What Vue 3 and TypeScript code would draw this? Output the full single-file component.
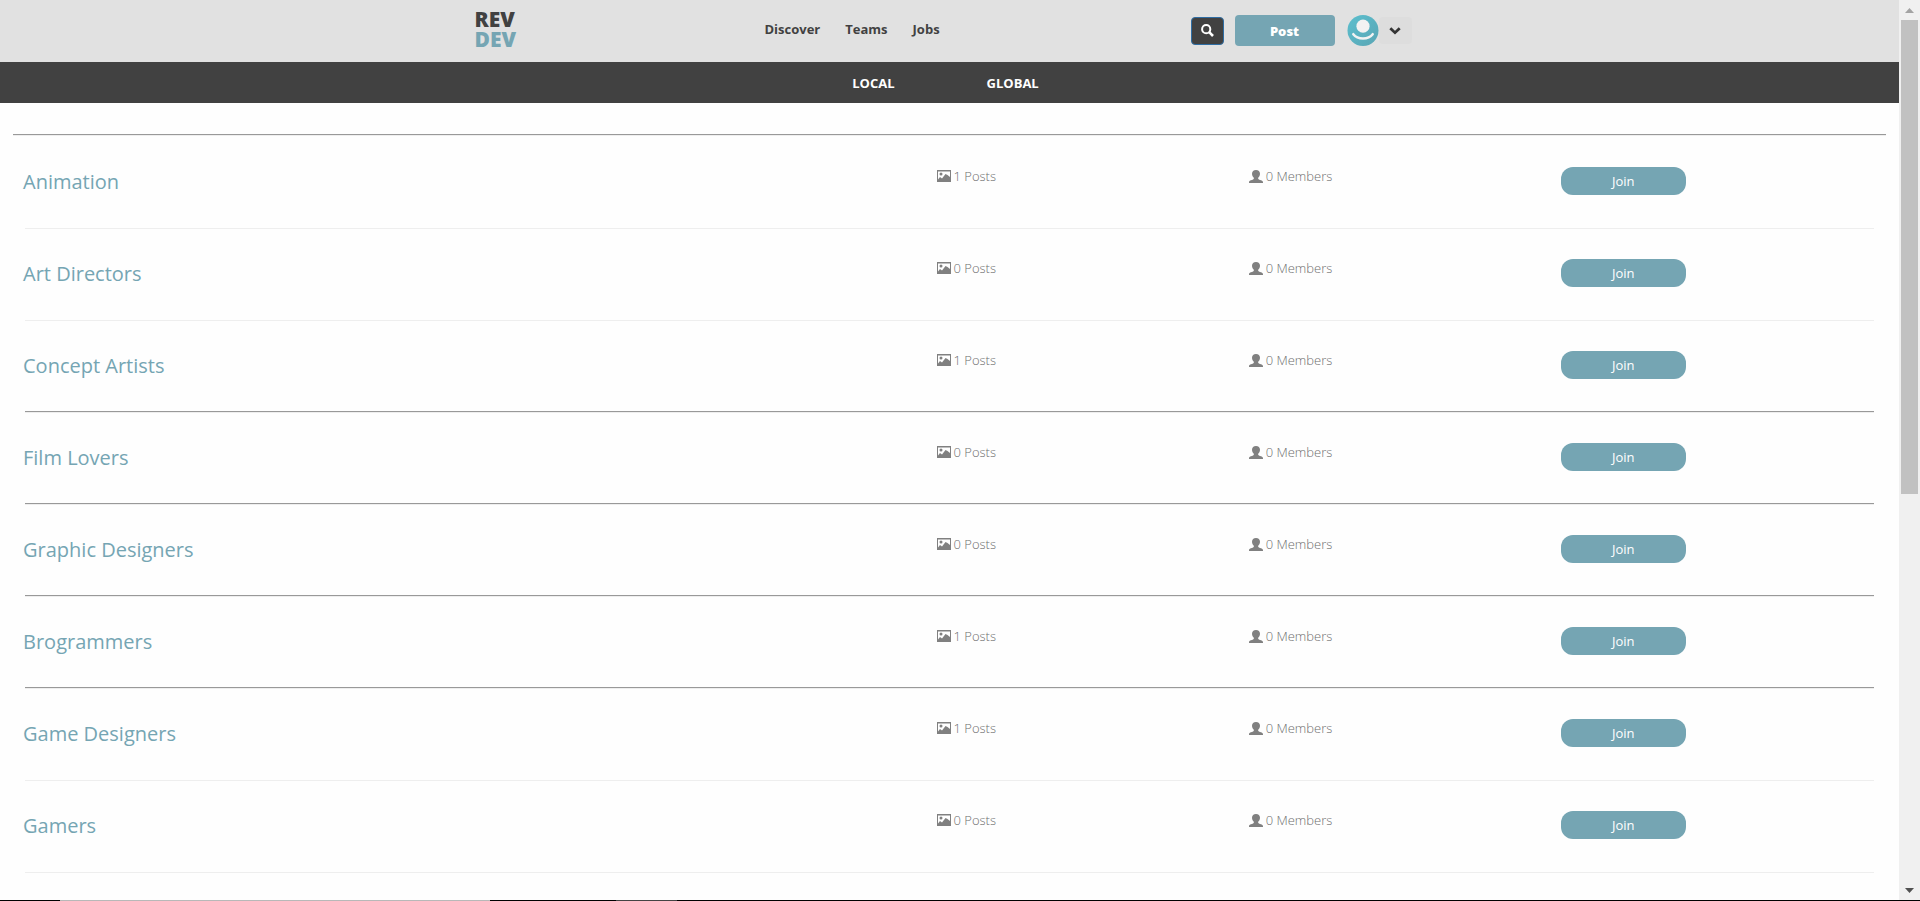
<script setup lang="ts">
interface Team {
  name: string
  posts: number
  members: number
  rule: 'light' | 'dark'
}

const navLinks: string[] = ['Discover', 'Teams', 'Jobs']
const scopes: string[] = ['LOCAL', 'GLOBAL']

const teams: Team[] = [
  { name: 'Animation', posts: 1, members: 0, rule: 'light' },
  { name: 'Art Directors', posts: 0, members: 0, rule: 'light' },
  { name: 'Concept Artists', posts: 1, members: 0, rule: 'dark' },
  { name: 'Film Lovers', posts: 0, members: 0, rule: 'dark' },
  { name: 'Graphic Designers', posts: 0, members: 0, rule: 'dark' },
  { name: 'Brogrammers', posts: 1, members: 0, rule: 'dark' },
  { name: 'Game Designers', posts: 1, members: 0, rule: 'light' },
  { name: 'Gamers', posts: 0, members: 0, rule: 'light' },
]
</script>

<template>
  <div class="window">
    <div class="pane">
      <div class="page">
        <header class="topbar">
          <div class="container">
            <a class="logo" href="#"><span>REV</span><span class="logo-accent">DEV</span></a>
            <nav class="nav">
              <a v-for="link in navLinks" :key="link" href="#">{{ link }}</a>
            </nav>
            <div class="actions">
              <button class="search" type="button" aria-label="Search">
                <svg width="13" height="13" viewBox="0 0 13 13" fill="none" stroke="#fff">
                  <circle cx="5.2" cy="5.2" r="4.1" stroke-width="2" />
                  <path d="M8.2 8.2 12 12" stroke-width="2.6" />
                </svg>
              </button>
              <button class="post" type="button">Post</button>
              <div class="account">
                <svg class="avatar" viewBox="0 0 32 32" aria-hidden="true">
                  <defs>
                    <linearGradient id="avatarFill" x1="0" y1="0" x2="1" y2="1">
                      <stop offset="0" stop-color="#5bbfce" />
                      <stop offset="1" stop-color="#5aa5b4" />
                    </linearGradient>
                  </defs>
                  <circle cx="16" cy="16" r="16" fill="url(#avatarFill)" />
                  <circle cx="16" cy="11.5" r="6.8" fill="#f2f2f2" />
                  <path d="M6 19.8C10.5 25.6 21.5 25.6 26 19.8" fill="none" stroke="#f2f2f2" stroke-width="2.6" stroke-linecap="round" />
                </svg>
                <button class="menu" type="button" aria-label="Account menu">
                  <svg width="12" height="8" viewBox="0 0 12 8" fill="none" stroke="#333" stroke-width="2.8">
                    <path d="M1.3 1.3 6 5.7 10.7 1.3" />
                  </svg>
                </button>
              </div>
            </div>
          </div>
        </header>

        <nav class="scopes">
          <a v-for="scope in scopes" :key="scope" href="#">{{ scope }}</a>
        </nav>

        <main>
          <hr class="rule dark first" />
          <template v-for="team in teams" :key="team.name">
            <section class="team">
              <h2><a href="#">{{ team.name }}</a></h2>
              <p class="stat">
                <svg width="14" height="12" viewBox="0 0 14 12" aria-hidden="true">
                  <path fill="#808080" fill-rule="evenodd" d="M0 0h14v12H0zM1 1.5v8L3 7l2 1.5 3.5-4.5 2 1L13 7V1.5z" />
                  <circle cx="4" cy="4" r="1.5" fill="#808080" />
                </svg>
                <span>{{ team.posts }} Posts</span>
              </p>
              <p class="stat">
                <svg width="14" height="13" viewBox="0 0 14 13" aria-hidden="true">
                  <path fill="#808080" d="M7 0C9.5 0 11 1.5 11 3.8 11 5.8 10 6.8 9.2 7.8V9C10.2 10 14 10.3 14 12.2V13H0V12.2C0 10.3 3.8 10 4.8 9V7.8C4 6.8 3 5.8 3 3.8 3 1.5 4.5 0 7 0Z" />
                </svg>
                <span>{{ team.members }} Members</span>
              </p>
              <button class="join" type="button">Join</button>
            </section>
            <hr class="rule" :class="team.rule" />
          </template>
        </main>
      </div>

      <div class="scrollbar" aria-hidden="true">
        <svg class="arrow" width="9" height="5" viewBox="0 0 9 5"><path fill="#a3a3a3" d="M0 5 4.5 0 9 5z" /></svg>
        <div class="track"><div class="thumb"></div></div>
        <svg class="arrow" width="9" height="5" viewBox="0 0 9 5"><path fill="#505050" d="M0 0 4.5 5 9 0z" /></svg>
      </div>
    </div>
    <div class="edge"></div>
  </div>
</template>

<style scoped>
.window {
  display: flex;
  flex-direction: column;
  height: 100vh;
  background: #fefefe;
  font-family: 'Open Sans', 'Noto Sans', sans-serif;
  font-size: 13px;
  color: #414141;
}
.window * {
  box-sizing: border-box;
}
a {
  color: inherit;
  text-decoration: none;
}
button {
  padding: 0;
  border: 0;
  font: inherit;
  cursor: pointer;
}
svg {
  display: block;
}
.pane {
  display: flex;
  flex: 1;
  min-height: 0;
}
.page {
  flex: 1;
  overflow: hidden;
}

.topbar {
  background: #e1e1e1;
}
.container {
  display: grid;
  grid-template-columns: 290px 426px 1fr;
  align-items: start;
  max-width: 1170px;
  height: 62px;
  margin: 0 auto;
  padding-left: 110px;
}
.logo {
  display: flex;
  flex-direction: column;
  padding-top: 9px;
  font-size: 21px;
  font-weight: 800;
  line-height: 20px;
}
.logo-accent {
  color: #75a5b3;
}
.nav {
  display: flex;
  gap: 25px;
  padding-top: 19px;
  font-weight: 700;
  line-height: 20px;
}
.actions {
  display: flex;
  align-items: center;
  padding-top: 15px;
}
.search {
  display: grid;
  place-items: center;
  width: 33px;
  height: 28px;
  border: 1px solid #2e6da4;
  border-radius: 4px;
  background: #414141;
}
.post {
  width: 100px;
  height: 31px;
  margin-left: 11px;
  border-radius: 4px;
  background: #75a5b3;
  color: #fff;
  font-weight: 800;
}
.account {
  display: flex;
  align-items: center;
  margin-left: 12px;
}
.avatar {
  width: 32px;
  height: 31px;
}
.menu {
  display: grid;
  place-items: center;
  width: 33px;
  height: 27px;
  border-radius: 4px;
  background: #dddddd;
}

.scopes {
  display: flex;
  justify-content: center;
  gap: 92px;
  padding: 11px 8px 10px 0;
  background: #414141;
  color: #fff;
  font-weight: 700;
  line-height: 20px;
}

.rule {
  height: 2px;
  margin: 0 25px;
  border: 0;
}
.rule.dark {
  border-top: 1px solid #999;
  border-bottom: 1px solid #eee;
}
.rule.light {
  border-bottom: 1px solid #eee;
}
.rule.first {
  margin: 31px 13px 1px;
}
.team {
  display: grid;
  grid-template-columns: 6fr 2fr 2fr 2fr;
  align-items: start;
  height: 90px;
  padding-right: 26px;
}
h2 {
  margin: 0;
  padding: 31px 0 0 23px;
  color: #75a5b3;
  font-size: 20px;
  font-weight: 400;
  line-height: 28px;
}
.stat {
  display: flex;
  align-items: center;
  gap: 3px;
  margin: 0;
  padding-top: 29px;
  color: #6e6e6e;
  font-weight: 300;
  line-height: 20px;
}
.join {
  width: 125px;
  height: 28px;
  margin-top: 30px;
  border-radius: 12px;
  background: #75a5b3;
  color: #fff;
}

.scrollbar {
  display: flex;
  flex-direction: column;
  align-items: center;
  width: 21px;
  padding: 8px 0 7px;
  background: #f0f0f0;
}
.track {
  flex: 1;
  width: 17px;
  padding: 7px 0;
}
.thumb {
  height: 55%;
  background: #c1c1c1;
}
.edge {
  height: 1px;
  background: linear-gradient(90deg, #000 60px, #b8b8b8 60px 490px, #000 490px 616px, #444 616px 677px, #000 677px);
}
</style>

<style>
body {
  margin: 0;
}
</style>
